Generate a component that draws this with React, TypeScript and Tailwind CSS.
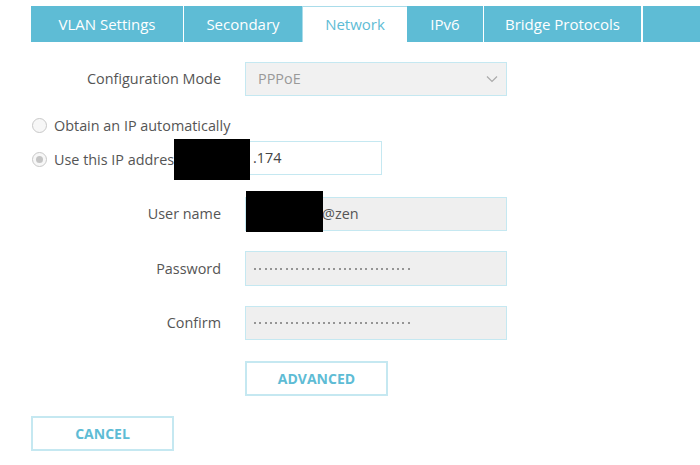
import React from "react";

const font = { fontFamily: '"Open Sans", "Noto Sans", sans-serif' };

function Radio({ checked }: { checked?: boolean }) {
  return (
    <span className="relative flex h-[15px] w-[15px] items-center justify-center rounded-full border border-[#c8c8c8] bg-[#f7f7f7]">
      {checked && <span className="h-[7px] w-[7px] rounded-full bg-[#c4c4c4]" />}
    </span>
  );
}

function Field({ label, children, className = "" }: { label: string; children: React.ReactNode; className?: string }) {
  return (
    <div className={`flex items-center ${className}`}>
      <div className="w-[221px] text-right text-[14.4px] text-[#555]">{label}</div>
      <div className="ml-[24px]">{children}</div>
    </div>
  );
}

function Dots() {
  return (
    <div className="flex items-center gap-[3.3px]">
      {Array.from({ length: 30 }).map((_, i) => (
        <span key={i} className="h-[2px] w-[2px] rounded-full bg-[#777]" />
      ))}
    </div>
  );
}

export default function App() {
  return (
    <div className="h-[465px] w-[700px] overflow-hidden bg-white" style={font}>
      {/* Tabs */}
      <div className="ml-[31px] mt-[6px] flex h-[36px] text-[15px]">
        <div className="flex w-[152px] items-center justify-center bg-[#5ebcd5] text-white">VLAN Settings</div>
        <div className="ml-[1px] flex w-[118px] items-center justify-center bg-[#5ebcd5] text-white">Secondary</div>
        <div className="flex w-[105px] items-center justify-center border-l border-t border-[#a9dcea] bg-white text-[#5ebcd5]">Network</div>
        <div className="flex w-[76px] items-center justify-center bg-[#5ebcd5] text-white">IPv6</div>
        <div className="ml-[1px] flex w-[157px] items-center justify-center bg-[#5ebcd5] text-white">Bridge Protocols</div>
        <div className="ml-[2px] flex-1 bg-[#5ebcd5]" />
      </div>

      {/* Configuration mode */}
      <Field label="Configuration Mode" className="mt-[20px]">
        <div className="flex h-[34px] w-[262px] items-center justify-between border border-[#c5e8f1] bg-[#f1f1f1] pl-[12px] pr-[8px] text-[14.4px] text-[#999]">
          <span>PPPoE</span>
          <svg width="12" height="8" viewBox="0 0 12 8" fill="none">
            <path d="M1 1.5 L6 6.5 L11 1.5" stroke="#aaa" strokeWidth="1.2" />
          </svg>
        </div>
      </Field>

      {/* Radios */}
      <div className="ml-[32px] mt-[19px] flex items-center gap-[7px] text-[14.4px] text-[#555]">
        <Radio />
        <span>Obtain an IP automatically</span>
      </div>
      <div className="relative ml-[32px] mt-[12px] flex items-center text-[14.4px] text-[#555]">
        <Radio checked />
        <span className="ml-[7px]">Use this IP address</span>
        <div className="absolute left-[142px] top-[-8px] flex h-[34px] w-[208px] items-center border border-[#c5e8f1] bg-white pl-[78px] text-[14.4px] text-[#444]">
          .174
        </div>
        <div className="absolute left-[142px] top-[-10px] h-[41px] w-[76px] bg-black" />
      </div>

      {/* User name */}
      <Field label="User name" className="relative mt-[27px]">
        <div className="relative flex h-[34px] w-[262px] items-center border border-[#c5e8f1] bg-[#efefef] pl-[76px] text-[14.4px] text-[#555]">
          <span>@zen</span>
          <div className="absolute left-[0px] top-[-7px] h-[41px] w-[77px] bg-black" />
        </div>
      </Field>

      {/* Password */}
      <Field label="Password" className="mt-[20px]">
        <div className="flex h-[35px] w-[262px] items-center overflow-hidden border border-[#c5e8f1] bg-[#efefef] pl-[8px]">
          <Dots />
        </div>
      </Field>

      {/* Confirm */}
      <Field label="Confirm" className="mt-[20px]">
        <div className="flex h-[34px] w-[262px] items-center overflow-hidden border border-[#c5e8f1] bg-[#efefef] pl-[8px]">
          <Dots />
        </div>
      </Field>

      {/* Advanced */}
      <div className="ml-[245px] mt-[21px] flex h-[35px] w-[143px] items-center justify-center border-2 border-[#c5e8f1] text-[14px] font-bold text-[#5ebcd5]">
        ADVANCED
      </div>

      {/* Cancel */}
      <div className="ml-[31px] mt-[20px] flex h-[35px] w-[143px] items-center justify-center border-2 border-[#c5e8f1] text-[14px] font-bold text-[#5ebcd5]">
        CANCEL
      </div>
    </div>
  );
}
